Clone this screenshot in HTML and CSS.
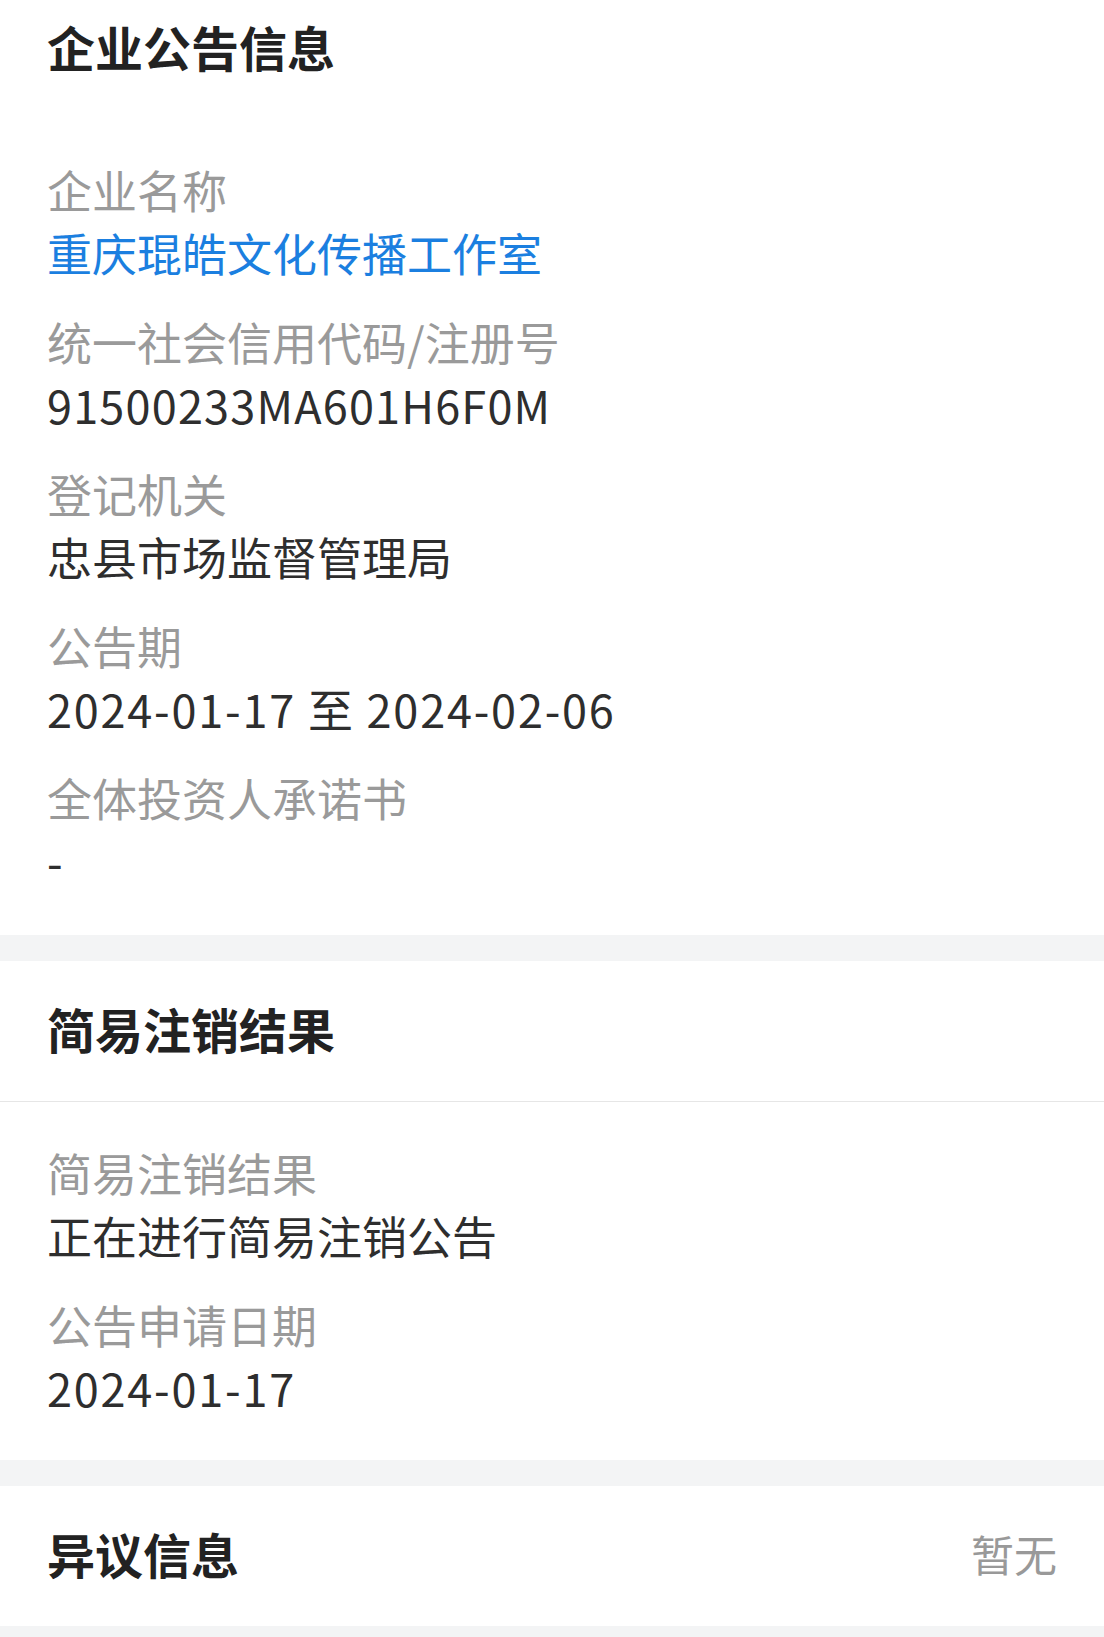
FILE: index.html
```html
<!DOCTYPE html>
<html lang="zh-CN">
<head>
<meta charset="utf-8">
<title>企业公告信息</title>
<link rel="stylesheet" href="styles.css">
</head>
<body>
<div class="page">
  <section class="card card--first">
    <div class="card-head card-head--plain">
      <h2 class="card-title">企业公告信息</h2>
    </div>
    <div class="card-body">
      <div class="field">
        <div class="field-label">企业名称</div>
        <div class="field-value field-value--link">重庆琨皓文化传播工作室</div>
      </div>
      <div class="field">
        <div class="field-label">统一社会信用代码/注册号</div>
        <div class="field-value num">91500233MA601H6F0M</div>
      </div>
      <div class="field">
        <div class="field-label">登记机关</div>
        <div class="field-value">忠县市场监督管理局</div>
      </div>
      <div class="field">
        <div class="field-label">公告期</div>
        <div class="field-value num num--wide">2024-01-17 至 2024-02-06</div>
      </div>
      <div class="field">
        <div class="field-label">全体投资人承诺书</div>
        <div class="field-value num">-</div>
      </div>
    </div>
  </section>

  <section class="card">
    <div class="card-head">
      <h2 class="card-title">简易注销结果</h2>
    </div>
    <div class="card-body">
      <div class="field">
        <div class="field-label">简易注销结果</div>
        <div class="field-value">正在进行简易注销公告</div>
      </div>
      <div class="field">
        <div class="field-label">公告申请日期</div>
        <div class="field-value num num--wide">2024-01-17</div>
      </div>
    </div>
  </section>

  <section class="card">
    <div class="card-head card-head--plain card-head--row">
      <h2 class="card-title">异议信息</h2>
      <span class="card-extra">暂无</span>
    </div>
  </section>
</div>
</body>
</html>
```

FILE: styles.css
```css
* {
  box-sizing: border-box;
}

html, body {
  margin: 0;
  padding: 0;
  background: #f3f4f5;
}

body {
  font-family: "Noto Sans CJK SC", "Noto Sans", sans-serif;
  color: #333333;
}

.page {
  display: flex;
  flex-direction: column;
  gap: 26px;
  padding-bottom: 20px;
}

.card {
  background: #ffffff;
}

.card-head {
  height: 141px;
  display: flex;
  align-items: center;
  padding: 0 47px 6px;
  border-bottom: 1px solid #e6e6e6;
}

.card-head--plain {
  border-bottom: none;
  height: 140px;
}

.card--first .card-head {
  height: 98px;
}

.card-head--row {
  justify-content: space-between;
}

.card-title {
  margin: 0;
  font-size: 48px;
  font-weight: 700;
  line-height: 66px;
  color: #222222;
}

.card-extra {
  font-size: 43px;
  line-height: 60px;
  color: #999999;
}

.card-body {
  padding: 39px 47px 41px;
  display: flex;
  flex-direction: column;
  gap: 26px;
}

.card--first .card-body {
  padding-top: 60px;
  padding-bottom: 43px;
}

.field {
  display: flex;
  flex-direction: column;
}

.field-label {
  font-size: 45px;
  line-height: 63px;
  color: #9a9a9a;
}

.field-value {
  font-size: 45px;
  line-height: 63px;
  color: #2e2e2e;
}

.field-value--link {
  color: #1b7fe0;
}

.num {
  letter-spacing: 1.2px;
}

.num--wide {
  letter-spacing: 1.8px;
}
```
